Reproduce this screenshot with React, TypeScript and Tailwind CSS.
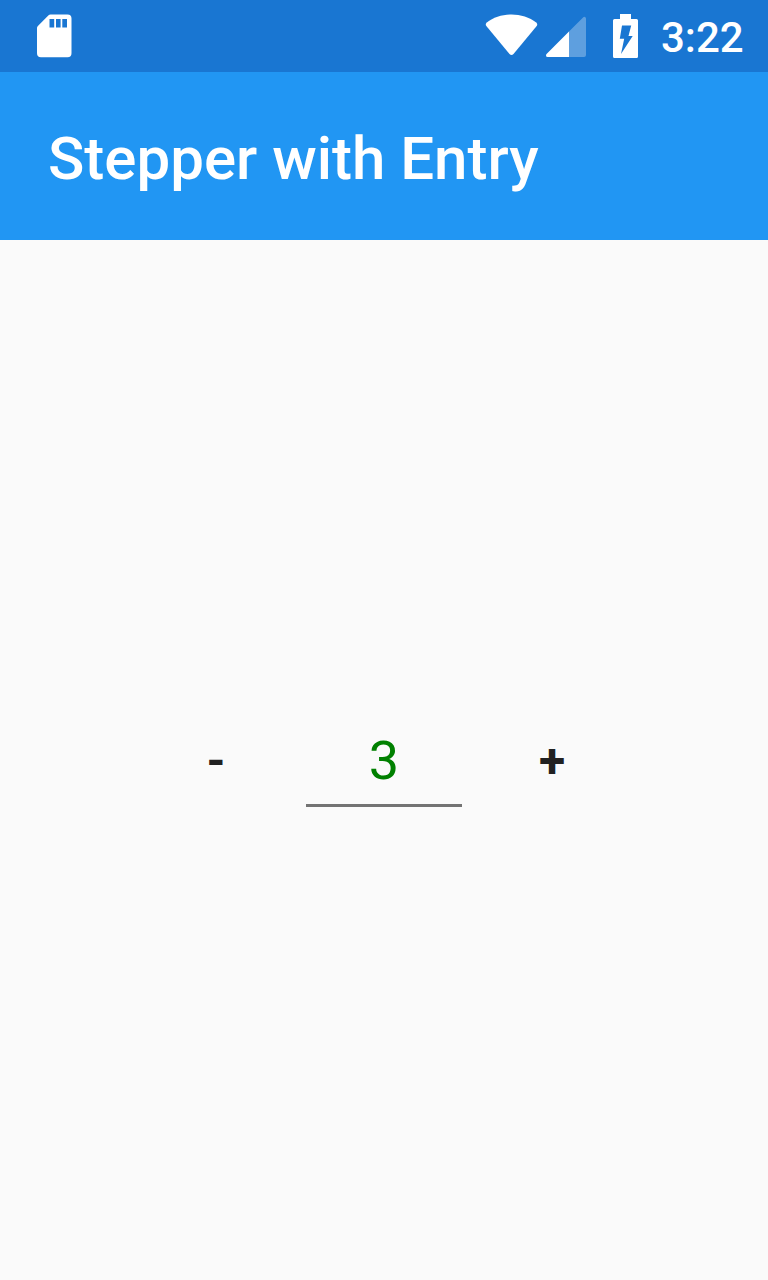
export default function App() {
  return (
    <div className="flex h-[1280px] w-[768px] flex-col overflow-hidden bg-[#fafafa] font-['Roboto',sans-serif]">
      <header>
        <div className="flex h-[72px] items-start bg-[#1976d2] text-white">
          <svg className="ml-9 mt-[14px] h-11 w-9" viewBox="0 0 36 44">
            <path fill="currentColor" fillRule="evenodd" d="M14.500 .5H31.500Q35.500 .5 35.500 4.500V39.300Q35.500 43.300 31.500 43.300H5Q1 43.300 1 39.300V14Q1 12.800 1.900 11.900L12.300 1.500Q13.300 .5 14.500 .5ZM13.500 5V13.600H18.200V5ZM20 5V13.600H24.600V5ZM26.300 5V13.600H31V5Z" />
          </svg>
          <svg className="ml-[413px] mt-[14px] h-[42px] w-[53px]" viewBox="0 0 53 42">
            <path fill="currentColor" d="M1.800 8.600C15-2.200 38-2.200 51.200 8.600Q53 10.200 51.700 12L28.500 40Q26.500 42.200 24.500 40L1.300 12Q0 10.200 1.800 8.600Z" />
          </svg>
          <svg className="ml-2 mt-4 h-[41px] w-10" viewBox="0 0 40 41">
            <path fill="currentColor" fillOpacity="0.3" d="M23 15.500L36.800 1.700Q37.800 .7 38.800 .9Q40 1.200 40 2.700V39Q40 41 38 41H23Z" />
            <path fill="currentColor" d="M23 15.500V41H1.700Q0 41 0 39.500Q0 38.500 .8 37.700Z" />
          </svg>
          <svg className="ml-[27px] mt-[14px] h-11 w-[25px]" viewBox="0 0 25 44">
            <path fill="currentColor" fillRule="evenodd" d="M7 0H18V5H23.500Q25 5 25 6.500V42.500Q25 44 23.500 44H1.500Q0 44 0 42.500V6.500Q0 5 1.500 5H7ZM9 11.500L6.800 24.700H11.200L8 40L19.700 21.900H15.500L18.200 11.500Z" />
          </svg>
          <span className="ml-[23px] mt-[13px] text-[42px] font-medium leading-[49px]">3:22</span>
        </div>
        <div className="flex h-[168px] items-center bg-[#2196f3] px-12 pt-1.5">
          <h1 className="text-[60px] font-medium leading-[70px] text-white">Stepper with Entry</h1>
        </div>
      </header>
      <main className="flex flex-1 items-center justify-center">
        <button className="h-[96px] w-[180px] pt-0.5 text-[48px] font-bold leading-[94px] text-[#212121]">-</button>
        <input aria-label="Value" defaultValue="3" className="h-[94px] w-[156px] border-b-[3px] border-[#737373] bg-transparent pt-[3px] text-center text-[54px] text-[#008000] outline-none" />
        <button className="h-[96px] w-[180px] pt-0.5 text-[48px] font-bold leading-[94px] text-[#212121]">+</button>
      </main>
    </div>
  );
}
